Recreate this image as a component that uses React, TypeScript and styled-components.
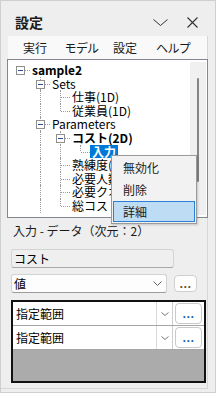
import React from "react";
import styled, { createGlobalStyle, css } from "styled-components";

const UI_FONT = `"Noto Sans CJK JP", "Noto Sans", sans-serif`;

const GlobalStyle = createGlobalStyle`
  html, body { margin: 0; padding: 0; background: #eeeeee; }
  body { font-family: ${UI_FONT}; color: #000; }
  *, *::before, *::after { box-sizing: border-box; }
`;

const Window = styled.div`
  position: relative;
  width: 216px;
  height: 393px;
  background: #eeeeee;
  border: 1px solid #cfcfcf;
  display: flex;
  flex-direction: column;
  overflow: hidden;
`;

const TitleBar = styled.div`
  height: 35px;
  flex-shrink: 0;
  padding: 7px 7px 0 14px;
  display: flex;
  align-items: center;
`;

const Title = styled.div`
  flex: 1;
  font-size: 14px;
  font-weight: 700;
  line-height: 20px;
  color: #1a1a1a;
`;

const TitleIcon = styled.div`
  width: 32px;
  height: 20px;
  display: flex;
  align-items: center;
  justify-content: center;
  color: #333;
`;

const Panel = styled.div`
  width: 207px;
  height: 353px;
  border-right: 1px solid #d6d6d6;
  border-bottom: 1px solid #d6d6d6;
  display: flex;
  flex-direction: column;
`;

const MenuBar = styled.div`
  height: 23px;
  flex-shrink: 0;
  margin-left: 7px;
  padding-left: 6px;
  background: #f9f9f9;
  display: flex;
  align-items: center;
`;

const MenuItem = styled.div<{ $w: number }>`
  width: ${(p) => p.$w}px;
  padding-left: 9px;
  font-size: 12px;
  line-height: 16px;
  white-space: nowrap;
  font-feature-settings: "palt";
  color: #1a1a1a;
`;

const TreeBox = styled.div`
  margin-left: 6px;
  width: 201px;
  height: 159px;
  flex-shrink: 0;
  border: 1px solid #828790;
  background: #fff;
  display: flex;
  position: relative;
`;

const TreeList = styled.div`
  flex: 1;
  overflow: hidden;
  padding: 3px 0 0 2px;
`;

const TreeRow = styled.div`
  height: 13.6px;
  display: flex;
  align-items: stretch;
`;

const dotted = "1px dotted #9a9a9a";

const GuideCell = styled.div<{ $line: boolean }>`
  position: relative;
  width: 20px;
  flex-shrink: 0;
  ${(p) =>
    p.$line &&
    css`
      &::before {
        content: "";
        position: absolute;
        left: 10px;
        top: 0;
        bottom: 0;
        border-left: ${dotted};
      }
    `}
`;

const OwnCell = styled.div<{ $top: boolean; $bottom: boolean }>`
  position: relative;
  width: 20px;
  flex-shrink: 0;
  &::before {
    content: "";
    display: ${(p) => (p.$top || p.$bottom ? "block" : "none")};
    position: absolute;
    left: 10px;
    top: ${(p) => (p.$top ? "0" : "50%")};
    bottom: ${(p) => (p.$bottom ? "0" : "50%")};
    border-left: ${dotted};
  }
  &::after {
    content: "";
    position: absolute;
    left: 11px;
    right: 0;
    top: 7px;
    border-top: ${dotted};
  }
`;

const ExpandBox = styled.div`
  position: absolute;
  z-index: 1;
  left: 6px;
  top: 3px;
  width: 9px;
  height: 9px;
  border: 1px solid #8f8f8f;
  background: #fff;
  &::before {
    content: "";
    position: absolute;
    left: 1px;
    right: 1px;
    top: 3px;
    height: 1px;
    background: #2b4f94;
  }
`;

const NodeLabel = styled.span<{ $bold?: boolean; $selected?: boolean }>`
  padding: 0 2px;
  font-size: 12px;
  line-height: 13.6px;
  white-space: nowrap;
  font-weight: ${(p) => (p.$bold || p.$selected ? 700 : 400)};
  color: ${(p) => (p.$selected ? "#fff" : "#000")};
  background: ${(p) => (p.$selected ? "#0078d7" : "transparent")};
`;

const ScrollTrack = styled.div`
  width: 16px;
  margin: 2px 1px 2px 0;
  padding-top: 16px;
  background: #f0f0f0;
  display: flex;
  justify-content: center;
  align-items: flex-start;
`;

const ScrollThumb = styled.div`
  width: 2px;
  height: 104px;
  background: #858585;
  border-radius: 1px;
`;

const ContextMenu = styled.div`
  position: absolute;
  left: 110px;
  top: 154px;
  width: 86px;
  height: 69px;
  padding: 1px;
  background: #f2f2f2;
  border: 1px solid #9a9a9a;
  box-shadow: 1px 1px 2px rgba(0, 0, 0, 0.18);
  z-index: 5;
`;

const ContextItem = styled.div<{ $active?: boolean }>`
  height: 22px;
  padding-left: ${(p) => (p.$active ? "9px" : "10px")};
  font-size: 12px;
  line-height: ${(p) => (p.$active ? "20px" : "22px")};
  font-feature-settings: "palt";
  color: #1a1a1a;
  ${(p) =>
    p.$active &&
    css`
      height: 21px;
      background: #bfdcf5;
      border: 1px solid #2a7fd6;
      line-height: 19px;
    `}
`;

const Caption = styled.div`
  margin: 6px 0 0 12px;
  font-size: 12px;
  line-height: 13px;
  white-space: nowrap;
  color: #1b1b1b;
`;

const Form = styled.div`
  padding: 0 10px;
  display: flex;
  flex-direction: column;
`;

const ReadonlyField = styled.div`
  margin-top: 12px;
  width: 163px;
  height: 19px;
  padding-left: 2px;
  background: #efefef;
  border: 1px solid #d4d4d4;
  border-bottom-color: #a8a8a8;
  border-radius: 3px;
  font-size: 12px;
  line-height: 17px;
`;

const ComboRow = styled.div`
  margin-top: 6px;
  display: flex;
  align-items: center;
`;

const Combo = styled.div`
  width: 163px;
  height: 19px;
  padding: 0 4px 0 2px;
  background: #fdfdfd;
  border: 1px solid #d2d2d2;
  border-bottom-color: #9c9c9c;
  border-radius: 3px;
  display: flex;
  align-items: center;
  font-size: 12px;
`;

const ComboText = styled.span`
  flex: 1;
  line-height: 17px;
`;

const DotButton = styled.div<{ $blue?: boolean }>`
  margin-left: 7px;
  width: 24px;
  height: 17px;
  background: #fdfdfd;
  border: 1px solid #cfcfcf;
  border-radius: 4px;
  display: flex;
  align-items: center;
  justify-content: center;
  font-size: 11px;
  font-weight: 700;
  letter-spacing: 0.5px;
  color: ${(p) => (p.$blue ? "#1a63b8" : "#5a4a30")};
  padding-bottom: 2px;
`;

const Grid = styled.div`
  margin-top: 7px;
  width: 195px;
  height: 83px;
  border: 2px solid #111;
  background: #ababab;
  display: flex;
  flex-direction: column;
`;

const GridRow = styled.div`
  height: 24px;
  background: #fff;
  border-bottom: 1px solid #a5a5a5;
  display: flex;
`;

const ComboCell = styled.div`
  width: 160px;
  border-right: 1px solid #cdcdcd;
  display: flex;
`;

const CellText = styled.div`
  flex: 1;
  padding-left: 3px;
  font-size: 12px;
  line-height: 23px;
`;

const ChevronArea = styled.div`
  width: 16px;
  border-left: 1px solid #dadada;
  display: flex;
  align-items: center;
  justify-content: center;
`;

const ButtonCell = styled.div`
  flex: 1;
  padding: 1px 2px 1px 2px;
  display: flex;
`;

const GridButton = styled(DotButton)`
  margin: 0;
  width: 100%;
  height: 100%;
  background: #fff;
  border-color: #c9c9c9;
`;

const Chevron = ({ w = 9, h = 5, color = "#666" }: { w?: number; h?: number; color?: string }) => (
  <svg width={w} height={h} viewBox={`0 0 ${w} ${h}`}>
    <polyline
      points={`0.5,0.5 ${w / 2},${h - 0.5} ${w - 0.5},0.5`}
      fill="none"
      stroke={color}
      strokeWidth="1"
    />
  </svg>
);

const CloseIcon = () => (
  <svg width="11" height="11" viewBox="0 0 11 11">
    <path d="M0.5 0.5 L10.5 10.5 M10.5 0.5 L0.5 10.5" stroke="#333" strokeWidth="1.1" fill="none" />
  </svg>
);

type TreeNode = {
  label: string;
  level: number;
  guides: boolean[];
  top: boolean;
  bottom: boolean;
  box?: boolean;
  bold?: boolean;
  selected?: boolean;
};

const nodes: TreeNode[] = [
  { label: "sample2", level: 0, guides: [], top: false, bottom: false, box: true, bold: true },
  { label: "Sets", level: 1, guides: [false], top: true, bottom: true, box: true },
  { label: "仕事(1D)", level: 2, guides: [false, true], top: true, bottom: true },
  { label: "従業員(1D)", level: 2, guides: [false, true], top: true, bottom: false },
  { label: "Parameters", level: 1, guides: [false], top: true, bottom: true, box: true },
  { label: "コスト(2D)", level: 2, guides: [false, true], top: true, bottom: true, box: true, bold: true },
  { label: "入力", level: 3, guides: [false, true, true], top: true, bottom: false, selected: true },
  { label: "熟練度(2D)", level: 2, guides: [false, true], top: true, bottom: true },
  { label: "必要人数(1D)", level: 2, guides: [false, true], top: true, bottom: true },
  { label: "必要クオリティ(1D)", level: 2, guides: [false, true], top: true, bottom: true },
  { label: "総コスト", level: 2, guides: [false, true], top: true, bottom: false },
];

const menus: { label: string; w: number }[] = [
  { label: "実行", w: 42 },
  { label: "モデル", w: 48 },
  { label: "設定", w: 43 },
  { label: "ヘルプ", w: 44 },
];

export default function App() {
  return (
    <>
      <GlobalStyle />
      <Window>
        <TitleBar>
          <Title>設定</Title>
          <TitleIcon>
            <Chevron w={15} h={7} color="#333" />
          </TitleIcon>
          <TitleIcon>
            <CloseIcon />
          </TitleIcon>
        </TitleBar>
        <Panel>
          <MenuBar>
            {menus.map((m) => (
              <MenuItem key={m.label} $w={m.w}>
                {m.label}
              </MenuItem>
            ))}
          </MenuBar>
          <TreeBox>
            <TreeList>
              {nodes.map((n, i) => (
                <TreeRow key={i}>
                  {n.guides.map((g, k) => (
                    <GuideCell key={k} $line={g} />
                  ))}
                  <OwnCell $top={n.top} $bottom={n.bottom}>
                    {n.box && <ExpandBox />}
                  </OwnCell>
                  <NodeLabel $bold={n.bold} $selected={n.selected}>
                    {n.label}
                  </NodeLabel>
                </TreeRow>
              ))}
            </TreeList>
            <ScrollTrack>
              <ScrollThumb />
            </ScrollTrack>
          </TreeBox>
          <Caption>入力 - データ（次元：2）</Caption>
          <Form>
            <ReadonlyField>コスト</ReadonlyField>
            <ComboRow>
              <Combo>
                <ComboText>値</ComboText>
                <Chevron />
              </Combo>
              <DotButton>...</DotButton>
            </ComboRow>
            <Grid>
              {[0, 1].map((r) => (
                <GridRow key={r}>
                  <ComboCell>
                    <CellText>指定範囲</CellText>
                    <ChevronArea>
                      <Chevron w={8} h={4} color="#777" />
                    </ChevronArea>
                  </ComboCell>
                  <ButtonCell>
                    <GridButton $blue>...</GridButton>
                  </ButtonCell>
                </GridRow>
              ))}
            </Grid>
          </Form>
        </Panel>
        <ContextMenu>
          <ContextItem>無効化</ContextItem>
          <ContextItem>削除</ContextItem>
          <ContextItem $active>詳細</ContextItem>
        </ContextMenu>
      </Window>
    </>
  );
}
